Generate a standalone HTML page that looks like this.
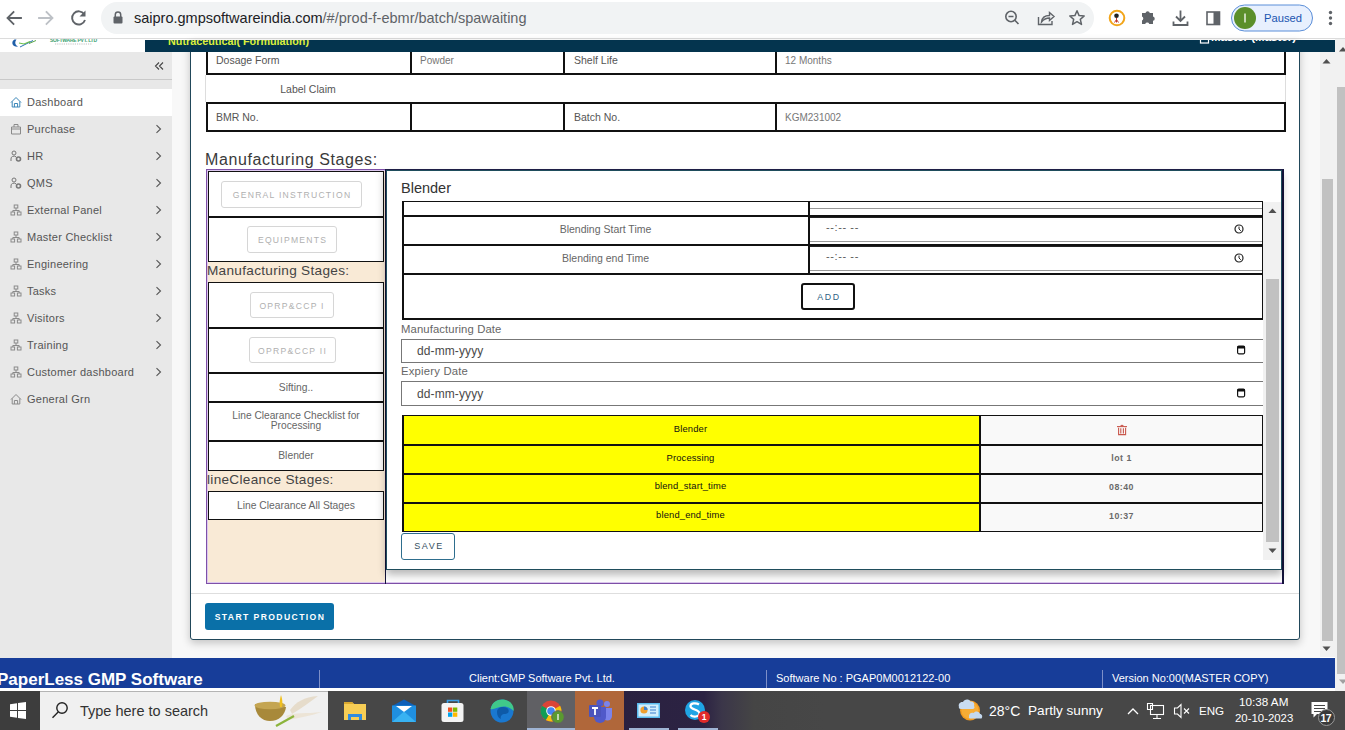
<!DOCTYPE html>
<html><head><meta charset="utf-8">
<style>
*{box-sizing:border-box;margin:0;padding:0}
html,body{width:1345px;height:730px;overflow:hidden;background:#fff;font-family:"Liberation Sans",sans-serif;position:relative}
.a{position:absolute}
.t{position:absolute;white-space:nowrap}
/* chrome */
#chrome{left:0;top:0;width:1345px;height:39px;background:#fff;border-bottom:1px solid #dcdcdc}
#addr{left:101px;top:2px;width:993px;height:32px;border-radius:16px;background:#f1f3f4}
/* page */
#navy{left:145px;top:40px;width:1190px;height:12px;background:#04344e;overflow:hidden}
#side{left:0;top:52px;width:172px;height:606px;background:#e8e8e8}
#gap{left:172px;top:52px;width:1148px;height:606px;background:#f8f8f8}
#card{left:190px;top:40px;width:1110px;height:600px;background:#fff;border:1.5px solid #21475a;border-radius:3px;box-shadow:0 3px 9px rgba(0,0,0,.22)}
#footer{left:0;top:658px;width:1335px;height:30px;background:#173d99}
#taskbar{left:0;top:691px;width:1345px;height:39px;background:#3b3b3b}
</style></head><body>
<div id="chrome" class="a"></div>

<div id="addr" class="a"></div>
<svg class="a" style="left:0;top:0" width="1345" height="38">
 <g fill="none" stroke="#5f6368" stroke-width="1.8" stroke-linecap="square">
  <path d="M8 18 H21 M13.5 12 L7.5 18 L13.5 24"/>
 </g>
 <g fill="none" stroke="#bdc1c6" stroke-width="1.8" stroke-linecap="square">
  <path d="M39 18 H52 M46.5 12 L52.5 18 L46.5 24"/>
 </g>
 <g fill="none" stroke="#5f6368" stroke-width="1.9">
  <path d="M84.2 14.2 A6.6 6.6 0 1 0 85 20"/>
 </g>
 <path d="M85.5 10.5 V16.5 H79.5 Z" fill="#5f6368"/>
 <g fill="#5f6368">
  <rect x="113.5" y="16.5" width="9" height="7" rx="1"/>
 </g>
 <path d="M115.3 17 V14.6 A2.7 2.7 0 0 1 120.7 14.6 V17" fill="none" stroke="#5f6368" stroke-width="1.5"/>
 <!-- zoom -->
 <g fill="none" stroke="#5f6368" stroke-width="1.6">
  <circle cx="1011" cy="16.5" r="5.2"/><path d="M1014.8 20.3 L1018.5 24 M1008.5 16.5 H1013.5"/>
 </g>
 <!-- share -->
 <g fill="none" stroke="#5f6368" stroke-width="1.4">
  <path d="M1038.5 17 V24.5 H1052 V21"/>
  <path d="M1041.5 22 C1042 17.5 1045 15.5 1049.5 15.5 V12.5 L1054 16.5 L1049.5 20.5 V18 C1046 18 1043.5 19.5 1041.5 22 Z"/>
 </g>
 <!-- star -->
 <path d="M1077 10.8 L1079.1 15.6 L1084.2 16 L1080.3 19.4 L1081.5 24.4 L1077 21.7 L1072.5 24.4 L1073.7 19.4 L1069.8 16 L1074.9 15.6 Z" fill="none" stroke="#5f6368" stroke-width="1.5" stroke-linejoin="round"/>
 <!-- ext orange -->
 <circle cx="1117" cy="18" r="7.3" fill="#fff" stroke="#f2a51a" stroke-width="2"/>
 <circle cx="1116.5" cy="15.8" r="2.3" fill="#222"/>
 <path d="M1116.5 18 V22.5 M1114.5 22.5 L1116.5 19.5 L1118.5 22.5" stroke="#c0392b" stroke-width="1" fill="none"/>
 <!-- puzzle -->
 <path d="M1142 13 H1145.5 A2.2 2.2 0 0 1 1149.8 13 H1153 V16.5 A2.2 2.2 0 0 1 1153 20.8 V24 H1149.3 A2.2 2.2 0 0 0 1145.2 24 H1142 V20.5 A2.2 2.2 0 0 0 1142 16.5 Z" fill="#5f6368"/>
 <!-- download -->
 <g fill="none" stroke="#5f6368" stroke-width="1.8">
  <path d="M1180.5 10.5 V20.5 M1176 16.5 L1180.5 21 L1185 16.5 M1173.5 21.5 V25 H1187.5 V21.5"/>
 </g>
 <!-- sidebar -->
 <rect x="1207" y="12" width="12.5" height="12.5" fill="none" stroke="#5f6368" stroke-width="1.6"/>
 <rect x="1213.5" y="12" width="6" height="12.5" fill="#5f6368"/>
 <!-- paused pill -->
 <rect x="1231.5" y="5" width="81" height="26" rx="13" fill="#e8f0fe" stroke="#5a8ed8" stroke-width="1"/>
 <circle cx="1245" cy="18" r="11" fill="#5b8f2a"/>
 <path d="M1245 13.5 V22.5" stroke="#fff" stroke-width="1.3"/>
 <g fill="#5f6368"><circle cx="1330.5" cy="12.5" r="1.7"/><circle cx="1330.5" cy="18" r="1.7"/><circle cx="1330.5" cy="23.5" r="1.7"/></g>
</svg>
<div class="t" style="left:134px;top:9px;font-size:14.5px;line-height:18px;color:#202124">saipro.gmpsoftwareindia.com<span style="color:#5f6368">/#/prod-f-ebmr/batch/spawaiting</span></div>
<div class="t" style="left:1264px;top:10px;font-size:11.2px;line-height:16px;color:#1a55b0">Paused</div>

<div id="side" class="a"></div>
<svg class="a" style="left:0;top:52px" width="172" height="380">
<path d="M0 27.5 H172" stroke="#c9c9c9" stroke-width="1"/>
<path d="M159 10.5 L155.5 14 L159 17.5 M163 10.5 L159.5 14 L163 17.5" fill="none" stroke="#444" stroke-width="1.1"/>
<rect x="0" y="37" width="172" height="27" fill="#fff"/>
<g transform="translate(16,50.0)"><path d="M-5 0.5 L0 -4.5 L5 0.5 M-3.8 -0.5 V5 H3.8 V-0.5 M-1.6 5 V1.5 H1.6 V5" fill="none" stroke="#3a86b8" stroke-width="1"/></g>
<g transform="translate(16,77.0)"><path d="M-4.5 -2 H4.5 V5 H-4.5 Z M-2 -2 V-4.5 H2 V-2 M-4.5 0 H4.5" fill="none" stroke="#8a8a8a" stroke-width="1"/></g>
<path d="M156.5 73.2 L160.5 77.0 L156.5 80.8" fill="none" stroke="#555" stroke-width="1.1"/>
<g transform="translate(16,104.0)"><g fill="none" stroke="#777" stroke-width="1"><circle cx="-2" cy="-3" r="2"/><path d="M-5 5 V3 A3 2.5 0 0 1 0 0.8"/><circle cx="2.5" cy="3" r="2" stroke-width="1.6"/></g></g>
<path d="M156.5 100.2 L160.5 104.0 L156.5 107.8" fill="none" stroke="#555" stroke-width="1.1"/>
<g transform="translate(16,131.0)"><g fill="none" stroke="#777" stroke-width="1"><circle cx="-2" cy="-3" r="2"/><path d="M-5 5 V3 A3 2.5 0 0 1 0 0.8"/><circle cx="2.5" cy="3" r="2" stroke-width="1.6"/></g></g>
<path d="M156.5 127.2 L160.5 131.0 L156.5 134.8" fill="none" stroke="#555" stroke-width="1.1"/>
<g transform="translate(16,158.0)"><g fill="none" stroke="#8a8a8a" stroke-width="1"><rect x="-1.8" y="-5" width="3.6" height="3"/><rect x="-5" y="2" width="3.6" height="3"/><rect x="1.4" y="2" width="3.6" height="3"/><path d="M0 -2 V0.5 M-3.2 2 V0.5 H3.2 V2"/></g></g>
<path d="M156.5 154.2 L160.5 158.0 L156.5 161.8" fill="none" stroke="#555" stroke-width="1.1"/>
<g transform="translate(16,185.0)"><g fill="none" stroke="#8a8a8a" stroke-width="1"><rect x="-1.8" y="-5" width="3.6" height="3"/><rect x="-5" y="2" width="3.6" height="3"/><rect x="1.4" y="2" width="3.6" height="3"/><path d="M0 -2 V0.5 M-3.2 2 V0.5 H3.2 V2"/></g></g>
<path d="M156.5 181.2 L160.5 185.0 L156.5 188.8" fill="none" stroke="#555" stroke-width="1.1"/>
<g transform="translate(16,212.0)"><g fill="none" stroke="#8a8a8a" stroke-width="1"><rect x="-1.8" y="-5" width="3.6" height="3"/><rect x="-5" y="2" width="3.6" height="3"/><rect x="1.4" y="2" width="3.6" height="3"/><path d="M0 -2 V0.5 M-3.2 2 V0.5 H3.2 V2"/></g></g>
<path d="M156.5 208.2 L160.5 212.0 L156.5 215.8" fill="none" stroke="#555" stroke-width="1.1"/>
<g transform="translate(16,239.0)"><g fill="none" stroke="#8a8a8a" stroke-width="1"><rect x="-1.8" y="-5" width="3.6" height="3"/><rect x="-5" y="2" width="3.6" height="3"/><rect x="1.4" y="2" width="3.6" height="3"/><path d="M0 -2 V0.5 M-3.2 2 V0.5 H3.2 V2"/></g></g>
<path d="M156.5 235.2 L160.5 239.0 L156.5 242.8" fill="none" stroke="#555" stroke-width="1.1"/>
<g transform="translate(16,266.0)"><g fill="none" stroke="#8a8a8a" stroke-width="1"><rect x="-1.8" y="-5" width="3.6" height="3"/><rect x="-5" y="2" width="3.6" height="3"/><rect x="1.4" y="2" width="3.6" height="3"/><path d="M0 -2 V0.5 M-3.2 2 V0.5 H3.2 V2"/></g></g>
<path d="M156.5 262.2 L160.5 266.0 L156.5 269.8" fill="none" stroke="#555" stroke-width="1.1"/>
<g transform="translate(16,293.0)"><g fill="none" stroke="#8a8a8a" stroke-width="1"><rect x="-1.8" y="-5" width="3.6" height="3"/><rect x="-5" y="2" width="3.6" height="3"/><rect x="1.4" y="2" width="3.6" height="3"/><path d="M0 -2 V0.5 M-3.2 2 V0.5 H3.2 V2"/></g></g>
<path d="M156.5 289.2 L160.5 293.0 L156.5 296.8" fill="none" stroke="#555" stroke-width="1.1"/>
<g transform="translate(16,320.0)"><g fill="none" stroke="#8a8a8a" stroke-width="1"><rect x="-1.8" y="-5" width="3.6" height="3"/><rect x="-5" y="2" width="3.6" height="3"/><rect x="1.4" y="2" width="3.6" height="3"/><path d="M0 -2 V0.5 M-3.2 2 V0.5 H3.2 V2"/></g></g>
<path d="M156.5 316.2 L160.5 320.0 L156.5 323.8" fill="none" stroke="#555" stroke-width="1.1"/>
<g transform="translate(16,347.0)"><path d="M-5 0.5 L0 -4.5 L5 0.5 M-3.8 -0.5 V5 H3.8 V-0.5 M-1.6 5 V1.5 H1.6 V5" fill="none" stroke="#8a8a8a" stroke-width="1"/></g>
</svg>
<div class="t" style="left:27px;top:88.5px;font-size:11px;line-height:27px;letter-spacing:0.25px;color:#555">Dashboard</div>
<div class="t" style="left:27px;top:115.5px;font-size:11px;line-height:27px;letter-spacing:0.25px;color:#555">Purchase</div>
<div class="t" style="left:27px;top:142.5px;font-size:11px;line-height:27px;letter-spacing:0.25px;color:#555">HR</div>
<div class="t" style="left:27px;top:169.5px;font-size:11px;line-height:27px;letter-spacing:0.25px;color:#555">QMS</div>
<div class="t" style="left:27px;top:196.5px;font-size:11px;line-height:27px;letter-spacing:0.25px;color:#555">External Panel</div>
<div class="t" style="left:27px;top:223.5px;font-size:11px;line-height:27px;letter-spacing:0.25px;color:#555">Master Checklist</div>
<div class="t" style="left:27px;top:250.5px;font-size:11px;line-height:27px;letter-spacing:0.25px;color:#555">Engineering</div>
<div class="t" style="left:27px;top:277.5px;font-size:11px;line-height:27px;letter-spacing:0.25px;color:#555">Tasks</div>
<div class="t" style="left:27px;top:304.5px;font-size:11px;line-height:27px;letter-spacing:0.25px;color:#555">Visitors</div>
<div class="t" style="left:27px;top:331.5px;font-size:11px;line-height:27px;letter-spacing:0.25px;color:#555">Training</div>
<div class="t" style="left:27px;top:358.5px;font-size:11px;line-height:27px;letter-spacing:0.25px;color:#555">Customer dashboard</div>
<div class="t" style="left:27px;top:385.5px;font-size:11px;line-height:27px;letter-spacing:0.25px;color:#555">General Grn</div>

<div id="gap" class="a"></div>
<div id="card" class="a"></div>
<div class="a" style="left:206px;top:45px;width:2px;height:30px;background:#111"></div>
<div class="a" style="left:206px;top:103px;width:2px;height:29px;background:#111"></div>
<div class="a" style="left:410px;top:45px;width:2px;height:30px;background:#111"></div>
<div class="a" style="left:410px;top:103px;width:2px;height:29px;background:#111"></div>
<div class="a" style="left:563px;top:45px;width:2px;height:30px;background:#111"></div>
<div class="a" style="left:563px;top:103px;width:2px;height:29px;background:#111"></div>
<div class="a" style="left:775px;top:45px;width:2px;height:30px;background:#111"></div>
<div class="a" style="left:775px;top:103px;width:2px;height:29px;background:#111"></div>
<div class="a" style="left:1284px;top:45px;width:2px;height:30px;background:#111"></div>
<div class="a" style="left:1284px;top:103px;width:2px;height:29px;background:#111"></div>
<div class="a" style="left:206px;top:73px;width:1080px;height:2px;background:#111"></div>
<div class="a" style="left:206px;top:102px;width:1080px;height:2px;background:#111"></div>
<div class="a" style="left:206px;top:130px;width:1080px;height:2px;background:#111"></div>
<div class="a" style="left:205px;top:75px;width:1px;height:27px;background:#ddd"></div>
<div class="a" style="left:1285px;top:75px;width:1px;height:27px;background:#ddd"></div>
<div class="t" style="left:216px;top:53px;font-size:10.5px;line-height:14px;color:#555">Dosage Form</div>
<div class="t" style="left:420px;top:54px;font-size:10px;line-height:14px;color:#777">Powder</div>
<div class="t" style="left:574px;top:53px;font-size:10.5px;line-height:14px;color:#555">Shelf Life</div>
<div class="t" style="left:785px;top:54px;font-size:10px;line-height:14px;color:#777">12 Months</div>
<div class="t" style="left:208.0px;top:82px;width:200px;text-align:center;font-size:10.5px;line-height:14px;color:#555">Label Claim</div>
<div class="t" style="left:216px;top:110px;font-size:10.5px;line-height:14px;color:#555">BMR No.</div>
<div class="t" style="left:574px;top:110px;font-size:10.5px;line-height:14px;color:#555">Batch No.</div>
<div class="t" style="left:785px;top:111px;font-size:10px;line-height:14px;color:#777">KGM231002</div>
<div class="t" style="left:205px;top:150px;font-size:16px;line-height:20px;letter-spacing:0.6px;color:#3a3a3a">Manufacturing Stages:</div>
<div class="a" style="left:206px;top:169px;width:1078px;height:415px;border:1px solid #7e50a8;box-shadow:inset 0 0 0 1px #dcc8ee"></div>
<div class="a" style="left:208px;top:171px;width:177px;height:411px;background:#f9ead6"></div>
<div class="a" style="left:385px;top:169px;width:899px;height:414.5px;border-left:1.5px solid #14143c;border-right:2px solid #14143c;border-top:1.5px solid #1f1f48"></div>
<div class="a" style="left:208px;top:171px;width:176px;height:46px;background:#fff;border:1px solid #111;box-shadow:inset -9px 0 8px -8px rgba(0,0,0,.08)"></div>
<div class="a" style="left:221px;top:181px;width:141px;height:26.5px;border:1px solid #d6d6d6;border-radius:3px"></div>
<div class="t" style="left:211.60000000000002px;top:182px;width:161px;text-align:center;font-size:8.6px;line-height:26.5px;letter-spacing:1.25px;color:#b0b0b0">GENRAL INSTRUCTION</div>
<div class="a" style="left:208px;top:217px;width:176px;height:45px;background:#fff;border:1px solid #111;box-shadow:inset -9px 0 8px -8px rgba(0,0,0,.08)"></div>
<div class="a" style="left:247px;top:226px;width:90px;height:26.5px;border:1px solid #d6d6d6;border-radius:3px"></div>
<div class="t" style="left:237.60000000000002px;top:227px;width:110px;text-align:center;font-size:8.6px;line-height:26.5px;letter-spacing:1.25px;color:#b0b0b0">EQUIPMENTS</div>
<div class="t" style="left:207px;top:261.3px;font-size:13.6px;line-height:20px;color:#444;letter-spacing:0.3px">Manufacturing Stages:</div>
<div class="a" style="left:208px;top:282px;width:176px;height:46px;background:#fff;border:1px solid #111;box-shadow:inset -9px 0 8px -8px rgba(0,0,0,.08)"></div>
<div class="a" style="left:249.5px;top:292px;width:84px;height:26px;border:1px solid #d6d6d6;border-radius:3px"></div>
<div class="t" style="left:240.10000000000002px;top:293px;width:104px;text-align:center;font-size:8.6px;line-height:26px;letter-spacing:1.25px;color:#b0b0b0">OPRP&amp;CCP I</div>
<div class="a" style="left:208px;top:328px;width:176px;height:45px;background:#fff;border:1px solid #111;box-shadow:inset -9px 0 8px -8px rgba(0,0,0,.08)"></div>
<div class="a" style="left:248.5px;top:337px;width:87px;height:26px;border:1px solid #d6d6d6;border-radius:3px"></div>
<div class="t" style="left:239.10000000000002px;top:338px;width:107px;text-align:center;font-size:8.6px;line-height:26px;letter-spacing:1.25px;color:#b0b0b0">OPRP&amp;CCP II</div>
<div class="a" style="left:208px;top:373px;width:176px;height:29px;background:#fff;border:1px solid #111;box-shadow:inset -9px 0 8px -8px rgba(0,0,0,.08)"></div>
<div class="t" style="left:208.0px;top:373px;width:176px;text-align:center;font-size:10.3px;line-height:29px;color:#666">Sifting..</div>
<div class="a" style="left:208px;top:402px;width:176px;height:39px;background:#fff;border:1px solid #111;box-shadow:inset -9px 0 8px -8px rgba(0,0,0,.08)"></div>
<div class="t" style="left:208px;top:411px;width:176px;text-align:center;font-size:10.2px;line-height:10px;color:#666;white-space:normal">Line Clearance Checklist for<br>Processing</div>
<div class="a" style="left:208px;top:441px;width:176px;height:30px;background:#fff;border:1px solid #111;box-shadow:inset -9px 0 8px -8px rgba(0,0,0,.08)"></div>
<div class="t" style="left:208.0px;top:441px;width:176px;text-align:center;font-size:10.3px;line-height:30px;color:#666">Blender</div>
<div class="t" style="left:207px;top:470.3px;font-size:13.6px;line-height:20px;color:#444;letter-spacing:0.3px">lineCleance Stages:</div>
<div class="a" style="left:208px;top:491px;width:176px;height:29px;background:#fff;border:1px solid #111;box-shadow:inset -9px 0 8px -8px rgba(0,0,0,.08)"></div>
<div class="t" style="left:208.0px;top:491px;width:176px;text-align:center;font-size:10.3px;line-height:29px;color:#666">Line Clearance All Stages</div>
<div class="a" style="left:386px;top:170px;width:896px;height:400px;background:#fff;border:1px solid #1f4d5c;box-shadow:0 5px 8px rgba(0,0,0,.28)"></div>
<div class="t" style="left:401px;top:178px;font-size:14.5px;line-height:20px;color:#333">Blender</div>
<div class="a" style="left:399px;top:201px;width:866px;height:359px;overflow:hidden">
<div class="a" style="left:411px;top:-16px;width:452px;height:23.80000000000001px;border-top:1.5px solid #222;border-bottom:1.5px solid #999;background:#fff"></div>
<div class="a" style="left:411px;top:16px;width:452px;height:25px;border-top:1.5px solid #222;border-bottom:1.5px solid #999;background:#fff"></div>
<div class="a" style="left:411px;top:45px;width:452px;height:24.80000000000001px;border-top:1.5px solid #222;border-bottom:1.5px solid #999;background:#fff"></div>
<div class="a" style="left:3px;top:0.30000000000001137px;width:861px;height:1.2px;background:#111"></div>
<div class="a" style="left:3px;top:14px;width:861px;height:2px;background:#111"></div>
<div class="a" style="left:3px;top:43px;width:861px;height:2px;background:#111"></div>
<div class="a" style="left:3px;top:72px;width:861px;height:2px;background:#111"></div>
<div class="a" style="left:3px;top:117px;width:861px;height:1.5px;background:#111"></div>
<div class="a" style="left:3px;top:1px;width:1.5px;height:117px;background:#111"></div>
<div class="a" style="left:862.5px;top:1px;width:1.5px;height:117px;background:#111"></div>
<div class="a" style="left:409px;top:1px;width:2px;height:73px;background:#111"></div>
<div class="t" style="left:3px;top:22px;font-size:10.5px;line-height:12px;color:#666"><div style="width:407px;text-align:center">Blending Start Time</div></div>
<div class="t" style="left:3px;top:51px;font-size:10.5px;line-height:12px;color:#666"><div style="width:407px;text-align:center">Blending end Time</div></div>
<div class="t" style="left:427px;top:20.19999999999999px;font-size:11px;line-height:12px;color:#5a5a5a;letter-spacing:0.6px">--:-- --</div>
<svg class="a" style="left:834px;top:21.5px" width="12" height="12"><circle cx="6" cy="6" r="4" fill="none" stroke="#222" stroke-width="1.2"/><path d="M6 3.6 V6 L7.8 7.8" fill="none" stroke="#222" stroke-width="1"/></svg>
<div class="t" style="left:427px;top:49.19999999999999px;font-size:11px;line-height:12px;color:#5a5a5a;letter-spacing:0.6px">--:-- --</div>
<svg class="a" style="left:834px;top:50.5px" width="12" height="12"><circle cx="6" cy="6" r="4" fill="none" stroke="#222" stroke-width="1.2"/><path d="M6 3.6 V6 L7.8 7.8" fill="none" stroke="#222" stroke-width="1"/></svg>
<div class="a" style="left:402px;top:82px;width:54px;height:26.5px;border:2px solid #111;border-radius:3px"></div>
<div class="t" style="left:402px;top:83px;font-size:8.8px;line-height:26px;letter-spacing:1.7px;color:#2f6383"><div style="width:54px;text-align:center;padding-left:2px">ADD</div></div>
<div class="t" style="left:2px;top:122px;font-size:11.3px;line-height:13px;color:#666;letter-spacing:0.1px">Manufacturing Date</div>
<div class="a" style="left:2px;top:138px;width:863px;height:24px;border:1px solid #777;background:#fff"></div>
<div class="t" style="left:18px;top:143px;font-size:12px;line-height:14px;color:#4a4a4a;letter-spacing:0.1px">dd-mm-yyyy</div>
<div class="t" style="left:2px;top:164px;font-size:11.3px;line-height:13px;color:#666;letter-spacing:0.2px">Expiery Date</div>
<div class="a" style="left:2px;top:180px;width:863px;height:25px;border:1px solid #777;background:#fff"></div>
<div class="t" style="left:18px;top:185.5px;font-size:12px;line-height:14px;color:#4a4a4a;letter-spacing:0.1px">dd-mm-yyyy</div>
<svg class="a" style="left:835px;top:144.2px" width="12" height="12"><rect x="3.6" y="1.2" width="7" height="7.6" rx="1.2" fill="none" stroke="#111" stroke-width="1.2"/><rect x="3.2" y="1" width="7.8" height="2.6" rx="1" fill="#111"/></svg>
<svg class="a" style="left:835px;top:186.7px" width="12" height="12"><rect x="3.6" y="1.2" width="7" height="7.6" rx="1.2" fill="none" stroke="#111" stroke-width="1.2"/><rect x="3.2" y="1" width="7.8" height="2.6" rx="1" fill="#111"/></svg>
<div class="a" style="left:3px;top:214px;width:578px;height:117px;background:#ffff00"></div>
<div class="a" style="left:581px;top:214px;width:283px;height:117px;background:#f9f9f9"></div>
<div class="a" style="left:3px;top:213.5px;width:861px;height:1.5px;background:#111"></div>
<div class="a" style="left:3px;top:242.5px;width:861px;height:2px;background:#111"></div>
<div class="a" style="left:3px;top:271.5px;width:861px;height:2px;background:#111"></div>
<div class="a" style="left:3px;top:300.5px;width:861px;height:2px;background:#111"></div>
<div class="a" style="left:3px;top:329.5px;width:861px;height:1.5px;background:#111"></div>
<div class="a" style="left:3px;top:214px;width:1.5px;height:117px;background:#111"></div>
<div class="a" style="left:580px;top:214px;width:2px;height:117px;background:#111"></div>
<div class="a" style="left:862.5px;top:214px;width:1.5px;height:117px;background:#111"></div>
<div class="t" style="left:3px;top:222.2px;font-size:9.4px;line-height:12px;color:#111;letter-spacing:0.15px"><div style="width:577px;text-align:center">Blender</div></div>
<div class="t" style="left:3px;top:250.7px;font-size:9.4px;line-height:12px;color:#111;letter-spacing:0.15px"><div style="width:577px;text-align:center">Processing</div></div>
<div class="t" style="left:581px;top:251.10000000000002px;font-size:8.8px;line-height:12px;color:#6a6a6a;letter-spacing:0.5px;font-weight:bold"><div style="width:283px;text-align:center">lot 1</div></div>
<div class="t" style="left:3px;top:279.2px;font-size:9.4px;line-height:12px;color:#111;letter-spacing:0.15px"><div style="width:577px;text-align:center">blend_start_time</div></div>
<div class="t" style="left:581px;top:279.6px;font-size:8.8px;line-height:12px;color:#6a6a6a;letter-spacing:0.5px;font-weight:bold"><div style="width:283px;text-align:center">08:40</div></div>
<div class="t" style="left:3px;top:308.2px;font-size:9.4px;line-height:12px;color:#111;letter-spacing:0.15px"><div style="width:577px;text-align:center">blend_end_time</div></div>
<div class="t" style="left:581px;top:308.6px;font-size:8.8px;line-height:12px;color:#6a6a6a;letter-spacing:0.5px;font-weight:bold"><div style="width:283px;text-align:center">10:37</div></div>
<svg class="a" style="left:717px;top:222px" width="12" height="13"><g fill="none" stroke="#c9574c" stroke-width="1.1"><path d="M1 3.6 H11"/><path d="M4.6 3.2 Q6 1.2 7.4 3.2"/><path d="M2.6 4.8 V11.6 H9.6 V4.8"/><path d="M4.8 5.2 V10.4 M7.4 5.2 V10.4"/></g></svg>
<div class="a" style="left:2px;top:332px;width:54px;height:27px;border:1px solid #2e6e8e;border-radius:3px;background:#fff"></div>
<div class="t" style="left:2px;top:332px;font-size:9px;line-height:27px;letter-spacing:1.5px;color:#34505f"><div style="width:54px;text-align:center;padding-left:2px">SAVE</div></div>
</div>
<div class="a" style="left:1263px;top:202px;width:18px;height:358px;background:#f1f1f1"></div>
<div class="a" style="left:1266px;top:279px;width:13px;height:263px;background:#c1c1c1"></div>
<svg class="a" style="left:1263px;top:202px" width="18" height="358"><path d="M9.5 6.5 L13.5 11 H5.5 Z" fill="#505050"/><path d="M5.5 346.5 H13.5 L9.5 351 Z" fill="#505050"/></svg>
<div class="a" style="left:191px;top:593px;width:1108px;height:1px;background:#dedede"></div>
<div class="a" style="left:205px;top:603px;width:129px;height:27px;background:#0a70a8;border-radius:3px"></div>
<div class="t" style="left:205.0px;top:604px;width:129px;text-align:center;font-size:8.6px;line-height:27px;letter-spacing:1.4px;font-weight:bold;color:#fff;padding-left:1px">START PRODUCTION</div>
<div class="a" style="left:145px;top:40px;width:1190px;height:12px;background:#04344e;overflow:hidden">
 <div class="t" style="left:23px;top:-5.5px;font-size:10.8px;line-height:13px;font-weight:bold;color:#dcef3c">Nutraceutical( Formulation)</div>
 <svg class="a" style="left:1054px;top:-6px" width="12" height="10"><rect x="1.5" y="1" width="8" height="8" fill="none" stroke="#fff" stroke-width="1.2"/></svg>
 <div class="t" style="left:1066px;top:-9px;font-size:11.5px;line-height:13px;font-weight:bold;color:#fff">Master (Master)</div>
</div>
<!-- logo fragments -->
<svg class="a" style="left:0;top:39px" width="145" height="13">
 <path d="M14.5 0.5 C11.5 2 11.5 6.5 15.5 7.5 C17 7.8 18 7.5 18 7.5 C15 6 14.5 3 16.5 0.5 Z" fill="#1f5fa8"/>
 <path d="M20 8 L33 1.5" stroke="#2a70b8" stroke-width="1"/>
 <path d="M19 4 L24 5 L30 2.5" stroke="#6cc04a" stroke-width="1.2" fill="none"/>
 <path d="M29 4.5 L36 1.5" stroke="#5aa848" stroke-width="1"/>
 <text x="50" y="3.3" font-family="Liberation Sans" font-size="5" font-weight="bold" fill="#3aa070" textLength="47">SOFTWARE PVT. LTD</text>
 <path d="M55 5 H92" stroke="#999" stroke-width="0.6" stroke-dasharray="1.2 1"/>
</svg>
<!-- page scrollbars -->
<div class="a" style="left:1320px;top:52px;width:15px;height:605px;background:#f1f1f1"></div>
<div class="a" style="left:1322px;top:179px;width:11px;height:462px;background:#c1c1c1"></div>
<div class="a" style="left:1335px;top:39px;width:10px;height:652px;background:#f1f1f1"></div>
<div class="a" style="left:1337px;top:87px;width:8px;height:587px;background:#c1c1c1"></div>
<svg class="a" style="left:1320px;top:39px" width="25" height="652">
 <path d="M2.5 24.5 L6.5 20 L10.5 24.5 Z" fill="#505050"/>
 <path d="M2.5 607.5 H10.5 L6.5 612 Z" fill="#505050"/>
 <path d="M19 12.5 L23 8 L27 12.5 Z" fill="#505050"/>
 <path d="M19 640.5 H27 L23 645 Z" fill="#a0a0a0"/>
</svg>
<!-- footer -->
<div class="a" style="left:0;top:658px;width:1335px;height:30px;background:#173d99;overflow:hidden">
 <div class="t" style="left:-3px;top:11.5px;font-size:17px;line-height:20px;font-weight:bold;color:#fff">PaperLess GMP Software</div>
 <div class="a" style="left:319px;top:12px;width:1px;height:18px;background:#7d8fc8"></div>
 <div class="a" style="left:766px;top:12px;width:1px;height:18px;background:#7d8fc8"></div>
 <div class="a" style="left:1102px;top:12px;width:1px;height:18px;background:#7d8fc8"></div>
 <div class="t" style="left:469px;top:13px;font-size:11px;line-height:14px;color:#fff">Client:GMP Software Pvt. Ltd.</div>
 <div class="t" style="left:776px;top:13px;font-size:11px;line-height:14px;color:#fff">Software No : PGAP0M0012122-00</div>
 <div class="t" style="left:1112px;top:13px;font-size:11px;line-height:14px;color:#fff">Version No:00(MASTER COPY)</div>
</div>
<!-- taskbar -->
<div class="a" style="left:0;top:691px;width:1345px;height:39px;background:#474747"></div>
<div class="a" style="left:0;top:691px;width:40px;height:39px;background:#3d3d3d"></div>
<div class="a" style="left:40px;top:691px;width:288px;height:39px;background:#f0f0f0;border-top:1px solid #b4b4b4"></div>
<div class="a" style="left:527px;top:691px;width:48px;height:39px;background:#606064"></div>
<div class="a" style="left:575px;top:691px;width:49px;height:39px;background:#b0673a"></div>
<div class="a" style="left:624px;top:691px;width:200px;height:39px;background:linear-gradient(90deg,#2a2140 0,#2c2343 80px,#3b3649 98px,#454545 130px,#474747 200px)"></div>
<div class="a" style="left:527px;top:728px;width:48px;height:2px;background:#9fb4d4"></div>
<div class="a" style="left:629px;top:728px;width:40px;height:2px;background:#9fb4d4"></div>
<div class="a" style="left:678px;top:728px;width:40px;height:2px;background:#9fb4d4"></div>
<svg class="a" style="left:0;top:690px" width="1345" height="40">
 <!-- windows logo -->
 <g fill="#fff"><path d="M10 14.3 L17 13.3 V20 H10 Z"/><path d="M18 13.1 L26 12 V20 H18 Z"/><path d="M10 21 H17 V27.7 L10 26.7 Z"/><path d="M18 21 H26 V29 L18 27.9 Z"/></g>
 <!-- search -->
 <g fill="none" stroke="#222" stroke-width="1.4"><circle cx="62" cy="18" r="5.2"/><path d="M58.2 22 L52.5 27.7"/></g>
 <!-- diya -->
 <path d="M255 14 C255 25 262 31 270 31 C279 31 285 25 286 17 Z" fill="#a8893a"/>
 <ellipse cx="270" cy="15.5" rx="15.5" ry="3.8" fill="#c4a552"/>
 <path d="M282 17 C283 12 282 8 281 5 C280 9 279 12 280 17 Z" fill="#f0c020"/>
 <path d="M290 20 C296 12 304 7 318 6 C310 12 302 18 292 24 Z" fill="#e6dccb"/>
 <path d="M286 26 C295 22 305 24 322 22 C310 26 298 28 288 30 Z" fill="#ece4d6"/>
 <path d="M276 36 L294 26" stroke="#8cb43c" stroke-width="2.2"/>
 <!-- file explorer -->
 <path d="M344 12 H352 L354 14 H366 V30 H344 Z" fill="#f6cd55"/><path d="M344 12 H352 L354 14 H344 Z" fill="#d9a830"/>
 <path d="M348 24 H362 V30 H359 V27 H351 V30 H348 Z" fill="#2f8be0"/>
 <!-- mail -->
 <path d="M392 16 L404 9.5 L416 16 Z" fill="#0d5fb8"/><rect x="392" y="15.5" width="24" height="16.5" fill="#1f8fe0"/><path d="M396 16 H412 L404 22 Z" fill="#fff"/><path d="M392 32 L404 21.5 L416 32 Z" fill="#38b2f2"/>
 <!-- store -->
 <rect x="441.5" y="13" width="22" height="19" rx="2.5" fill="#f4f4f4"/><path d="M447.5 13 V10.5 H458.5 V13" fill="none" stroke="#3a9ee6" stroke-width="1.6"/>
 <rect x="448" y="17.5" width="4.3" height="4.3" fill="#f25022"/><rect x="453" y="17.5" width="4.3" height="4.3" fill="#7fba00"/><rect x="448" y="22.5" width="4.3" height="4.3" fill="#00a4ef"/><rect x="453" y="22.5" width="4.3" height="4.3" fill="#ffb900"/>
 <!-- edge -->
 <circle cx="502" cy="21" r="11.5" fill="#1a78d0"/><path d="M490.6 19 C492 11 499 8.5 505 9.7 C511 11 514.5 16 513.5 21 C510 17 505 15.5 500 17 C495 18.5 492 20 490.6 19 Z" fill="#40c88a"/><path d="M497 22 C497 17 503 16 507 18 C510 20 509 24 505 24 C502 24 500 26 501 29 C498 28 497 25 497 22 Z" fill="#0e5aa8"/>
 <!-- chrome -->
 <circle cx="551" cy="21" r="10.5" fill="#db4437"/><path d="M551 21 L560.1 15.75 A10.5 10.5 0 0 1 545.75 30.1 Z" fill="#f4c20d"/><path d="M551 21 L545.75 30.1 A10.5 10.5 0 0 1 541.9 15.75 Z" fill="#0f9d58"/><circle cx="551" cy="21" r="4.8" fill="#fff"/><circle cx="551" cy="21" r="3.8" fill="#4285f4"/>
 <circle cx="558" cy="27" r="6.3" fill="#5a9a30" stroke="#606064" stroke-width="1"/><path d="M558 24 V30" stroke="#fff" stroke-width="1.2"/>
 <!-- teams -->
 <circle cx="607" cy="14" r="3" fill="#7b83eb"/><path d="M603 18 H612 V26 A4.5 4.5 0 0 1 603 26 Z" fill="#7b83eb"/>
 <circle cx="600" cy="13" r="3.6" fill="#5059c9"/><path d="M594 17 H606 V27 A6 6 0 0 1 594 27 Z" fill="#5059c9"/>
 <rect x="589" y="15" width="12" height="12" rx="1" fill="#4b53bc"/><path d="M592 18 H598 M595 18 V25" stroke="#fff" stroke-width="1.8"/>
 <!-- control panel -->
 <rect x="637" y="13" width="23" height="15" fill="#5bbcf0"/><rect x="638.5" y="14.5" width="20" height="12" fill="#d2eefc"/><circle cx="644" cy="20" r="3.6" fill="#f0a030"/><path d="M644 20 V16.4 A3.6 3.6 0 0 1 647.6 20 Z" fill="#3a7fd0"/><path d="M650 17 H656 M650 20 H656 M650 23 H656" stroke="#3a7fd0" stroke-width="1.2"/>
 <!-- skype -->
 <circle cx="695" cy="20" r="10" fill="#1fa4e4"/><path d="M699 14.5 C696 12.5 690 13 690.5 16.5 C691 20 699.5 19 699.5 23.5 C699.5 27 693 27.5 690.5 25" fill="none" stroke="#fff" stroke-width="2.2"/>
 <circle cx="704" cy="27" r="6" fill="#e02a2a"/>
 <!-- weather -->
 <circle cx="970" cy="20.5" r="10" fill="#f39a1e"/><circle cx="970" cy="20.5" r="8.5" fill="#f7ad35"/>
 <path d="M959 17 C958 14 960 11.5 963 12 C964 9 969 8.5 970.5 11.5 C973 11 975 13 974 16 C975 17 974.5 19 972.5 19 H961 C959 19 958.5 17.5 959 17 Z" fill="#c9dcf0"/>
 <path d="M969 27 C968.5 24 971 22 973.5 23 C975 20.5 979.5 21 980 24 C982 24 983 26.5 981.5 28.5 H970.5 C969 28.5 968.5 27.5 969 27 Z" fill="#c4d8ee"/>
 <!-- tray icons -->
 <path d="M1128 24 L1133 19 L1138 24" fill="none" stroke="#fff" stroke-width="1.3"/>
 <g fill="none" stroke="#fff" stroke-width="1.1"><rect x="1150.5" y="15.5" width="13" height="9"/><path d="M1157 24.5 V28 M1153 28.5 H1161 M1147.5 13.5 H1152.5 V19.5 H1147.5 Z"/></g>
 <g fill="none" stroke="#fff" stroke-width="1.1"><path d="M1174.5 18 H1177.5 L1181 14.5 V27.5 L1177.5 24 H1174.5 Z"/><path d="M1184 18.5 L1189 23.5 M1189 18.5 L1184 23.5"/></g>
 <!-- notification -->
 <path d="M1311.5 12 H1327.5 V24 H1317 L1313.5 27.5 V24 H1311.5 Z" fill="#fff"/>
 <path d="M1314 15.5 H1325 M1314 18.5 H1325 M1314 21.5 H1321" stroke="#474747" stroke-width="1.2"/>
 <circle cx="1326.5" cy="27.5" r="8" fill="#3a3a3a" stroke="#9a9a9a" stroke-width="1"/>
</svg>
<div class="t" style="left:80px;top:702px;font-size:14.5px;line-height:18px;color:#333">Type here to search</div>
<div class="t" style="left:701.8px;top:712px;font-size:8.5px;line-height:10px;color:#fff;font-weight:bold">1</div>
<div class="t" style="left:989px;top:702px;font-size:14px;line-height:18px;color:#fff">28°C</div>
<div class="t" style="left:1028px;top:702px;font-size:13.6px;line-height:18px;color:#fff">Partly sunny</div>
<div class="t" style="left:1199px;top:703px;font-size:11.6px;line-height:16px;color:#fff">ENG</div>
<div class="t" style="left:1239px;top:694px;font-size:11.7px;line-height:15px;color:#fff">10:38 AM</div>
<div class="t" style="left:1235px;top:711px;font-size:11.4px;line-height:15px;color:#fff">20-10-2023</div>
<div class="t" style="left:1320.5px;top:711.5px;font-size:10.5px;line-height:12px;color:#fff;font-weight:bold;letter-spacing:-0.5px">17</div>

</body></html>
